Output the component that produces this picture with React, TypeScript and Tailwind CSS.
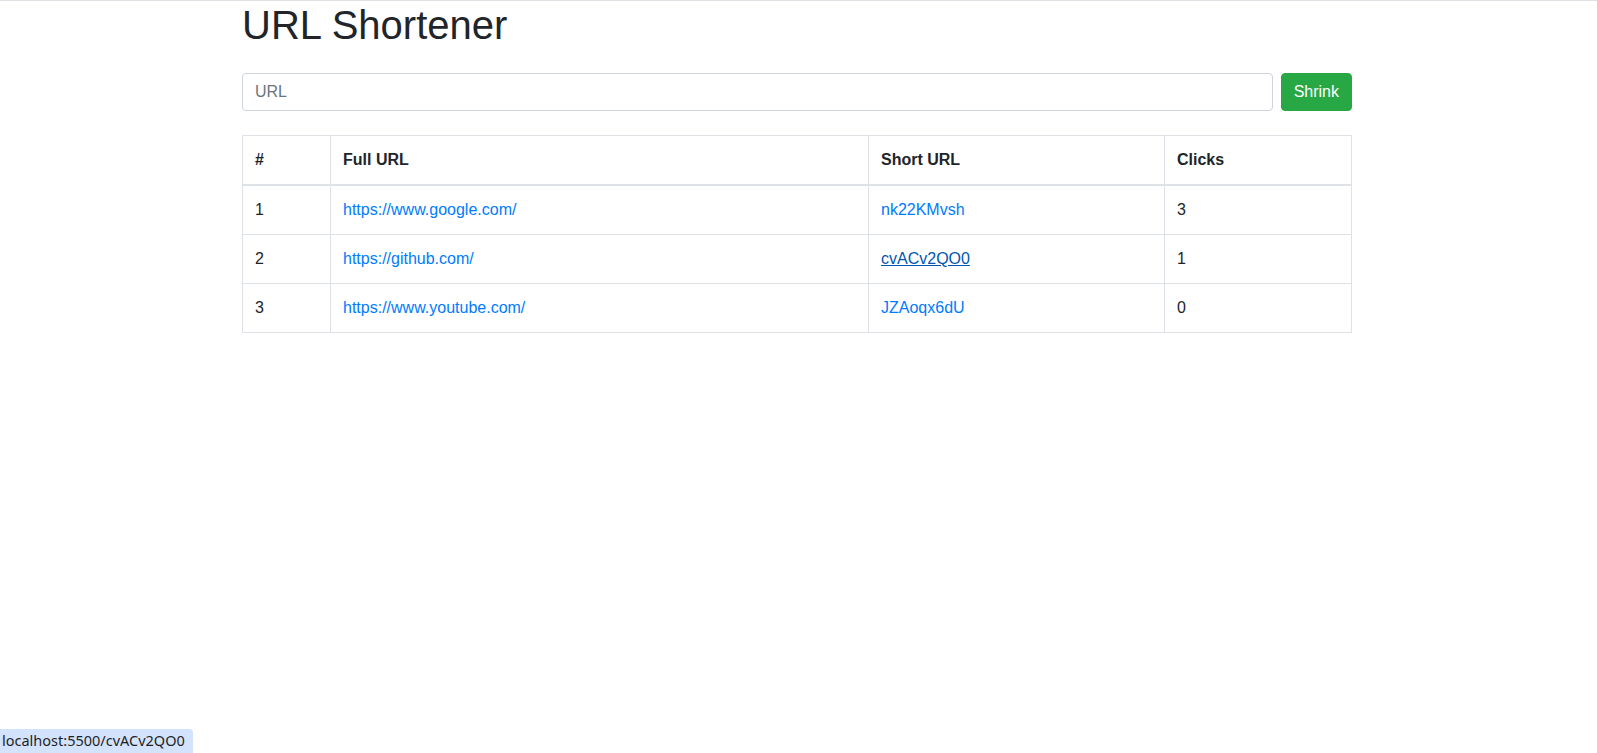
import React from 'react';

interface LinkRow {
  id: number;
  full: string;
  short: string;
  clicks: number;
  hovered?: boolean;
}

const rows: LinkRow[] = [
  { id: 1, full: 'https://www.google.com/', short: 'nk22KMvsh', clicks: 3 },
  { id: 2, full: 'https://github.com/', short: 'cvACv2QO0', clicks: 1, hovered: true },
  { id: 3, full: 'https://www.youtube.com/', short: 'JZAoqx6dU', clicks: 0 },
];

export default function App() {
  return (
    <div
      className="relative min-h-[753px] bg-white text-[#212529] border-t border-[#dee2e6]"
      style={{ fontFamily: '"Liberation Sans", Arial, sans-serif' }}
    >
      <div className="ml-[242px] w-[1110px]">
        <h1 className="text-[40px] leading-[48px] font-normal">URL Shortener</h1>

        {/* Form */}
        <form className="flex gap-2 mt-6" onSubmit={(e) => e.preventDefault()}>
          <input
            type="text"
            placeholder="URL"
            className="flex-1 h-[38px] px-3 text-base border border-[#ced4da] rounded-[4px] placeholder:text-[#6c757d] outline-none"
          />
          <button
            type="submit"
            className="h-[38px] px-3 text-base text-white bg-[#28a745] border border-[#28a745] rounded-[4px]"
          >
            Shrink
          </button>
        </form>

        {/* Table */}
        <table className="w-full table-fixed mt-6 border-collapse border border-[#dee2e6] text-base">
          <thead>
            <tr>
              <th className="w-[88px] text-left font-bold px-3 py-3 leading-6 border border-[#dee2e6] border-b-2">#</th>
              <th className="w-[538px] text-left font-bold px-3 py-3 leading-6 border border-[#dee2e6] border-b-2">Full URL</th>
              <th className="w-[296px] text-left font-bold px-3 py-3 leading-6 border border-[#dee2e6] border-b-2">Short URL</th>
              <th className="text-left font-bold px-3 py-3 leading-6 border border-[#dee2e6] border-b-2">Clicks</th>
            </tr>
          </thead>
          <tbody>
            {rows.map((r) => (
              <tr key={r.id}>
                <td className="px-3 py-3 leading-6 border border-[#dee2e6]">{r.id}</td>
                <td className="px-3 py-3 leading-6 border border-[#dee2e6]">
                  <a href={r.full} className="text-[#007bff]">{r.full}</a>
                </td>
                <td className="px-3 py-3 leading-6 border border-[#dee2e6]">
                  <a
                    href={r.short}
                    className={r.hovered ? 'text-[#0056b3] underline' : 'text-[#007bff]'}
                  >
                    {r.short}
                  </a>
                </td>
                <td className="px-3 py-3 leading-6 border border-[#dee2e6]">{r.clicks}</td>
              </tr>
            ))}
          </tbody>
        </table>
      </div>

      {/* Browser status bubble */}
      <div
        className="absolute left-0 bottom-0 h-[24px] pl-[2px] pr-[8px] flex items-center bg-[#d3e3fd] text-[#1f1f1f] text-[14.5px] rounded-tr-[4px]"
        style={{ fontFamily: '"Noto Sans", "DejaVu Sans", sans-serif' }}
      >
        localhost:5500/cvACv2QO0
      </div>
    </div>
  );
}
